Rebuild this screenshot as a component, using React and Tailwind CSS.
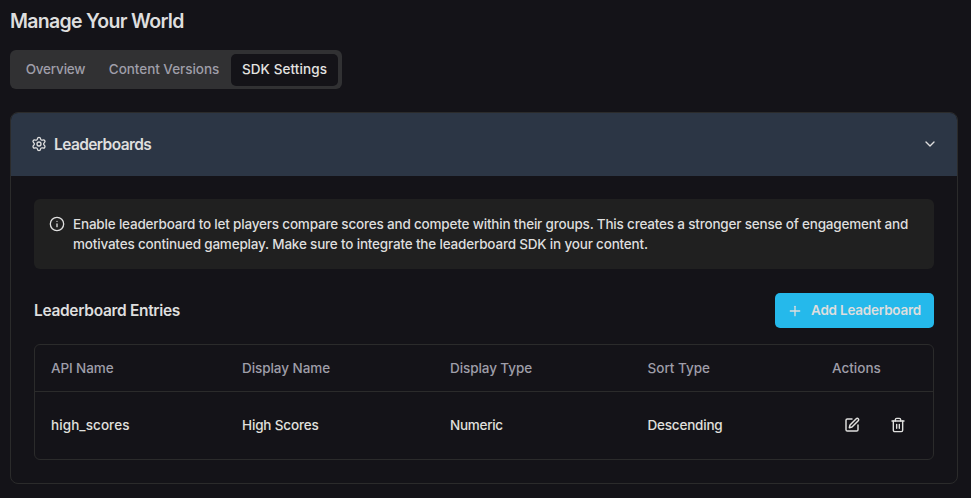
import { Settings, ChevronDown, Info, Plus } from "lucide-react";

const columns = "grid grid-cols-[191px_208px_197.5px_184.5px_1fr] items-center pl-4";

function Tab({ children, className }) {
  return (
    <button className={`flex h-[32px] items-center justify-center rounded-[5px] text-[13.5px] font-medium whitespace-nowrap ${className}`}>
      {children}
    </button>
  );
}

function EditIcon() {
  return (
    <svg width="16" height="16" viewBox="0 0 24 24" fill="none" stroke="currentColor" strokeWidth="2.2" strokeLinecap="round" strokeLinejoin="round">
      <path d="M12 3H5a2 2 0 0 0-2 2v14a2 2 0 0 0 2 2h14a2 2 0 0 0 2-2v-7" />
      <path d="M18.375 2.625a2.121 2.121 0 1 1 3 3L12 15l-4 1 1-4Z" />
    </svg>
  );
}

function TrashIcon() {
  return (
    <svg width="16" height="16" viewBox="0 0 24 24" fill="none" stroke="currentColor" strokeWidth="2.1" strokeLinecap="round" strokeLinejoin="round">
      <path d="M3 6h18" />
      <path d="M19 6v14c0 1-1 2-2 2H7c-1 0-2-1-2-2V6" />
      <path d="M8 6V4c0-1 1-2 2-2h4c1 0 2 1 2 2v2" />
      <path d="M10 11v6M14 11v6" />
    </svg>
  );
}

function LeaderboardTable() {
  return (
    <div className="mt-4 h-[115.5px] rounded-md border border-[#2b2b2b] text-[13.5px] font-medium">
      <div className={`${columns} h-[47px] border-b border-[#2b2b2b] text-[#9f9ea9]`}>
        <span className="tracking-[-0.1px]">API Name</span>
        <span className="tracking-[-0.06px]">Display Name</span>
        <span className="tracking-[-0.08px]">Display Type</span>
        <span>Sort Type</span>
        <span>Actions</span>
      </div>
      <div className={`${columns} h-[67px] text-[#e0e0de]`}>
        <span className="tracking-[0.08px]">high_scores</span>
        <span className="tracking-[-0.16px]">High Scores</span>
        <span className="tracking-[-0.28px]">Numeric</span>
        <span className="tracking-[-0.2px]">Descending</span>
        <span className="mb-px flex items-center gap-[30.5px] pl-[11.5px]">
          <EditIcon />
          <TrashIcon />
        </span>
      </div>
    </div>
  );
}

export default function App() {
  return (
    <main className="h-[498px] w-full overflow-hidden bg-[#141318] pt-[7px] pr-[13px] pl-[10px] font-['Inter','Liberation_Sans',sans-serif] text-[#dedede]">
      <h1 className="h-7 text-[19.5px] leading-7 font-semibold tracking-[-0.7px] whitespace-nowrap">Manage Your World</h1>
      <nav className="mt-[15px] flex h-[39px] w-[332px] items-center rounded-md bg-[#313133] px-1 text-[#9f9ea9]">
        <Tab className="w-[83px] tracking-[-0.2px]">Overview</Tab>
        <Tab className="w-[134px] tracking-[-0.04px]">Content Versions</Tab>
        <Tab className="w-[107px] bg-[#141318] tracking-[0.1px] text-[#e4e4e2]">SDK Settings</Tab>
      </nav>
      <section className="mt-[23px] h-[372px] overflow-hidden rounded-lg border border-[#2b2b2b]">
        <header className="flex h-[63px] items-center bg-[#2c3645] pr-[19px] pl-[19.5px]">
          <Settings size={16} className="mb-px" />
          <h2 className="ml-[7.5px] flex-1 pt-px text-[15.5px] font-semibold tracking-[-0.6px]">Leaderboards</h2>
          <ChevronDown size={16} className="mb-px" />
        </header>
        <div className="px-[23px] pt-[23px]">
          <div className="flex h-[70px] gap-2 rounded-md bg-[#202020] px-4 pt-[15px]">
            <Info size={16} className="mt-[2px] -ml-px shrink-0" />
            <p className="text-[13.5px] leading-5 font-[450] whitespace-nowrap">
              <span className="block tracking-[-0.189px]">Enable leaderboard to let players compare scores and compete within their groups. This creates a stronger sense of engagement and</span>
              <span className="block tracking-[-0.186px]">motivates continued gameplay. Make sure to integrate the leaderboard SDK in your content.</span>
            </p>
          </div>
          <div className="mt-6 flex h-[35px] items-center justify-between">
            <h3 className="pt-px text-[15.5px] font-semibold tracking-[-0.32px]">Leaderboard Entries</h3>
            <button className="flex h-[35px] w-[159px] items-center rounded-[5px] bg-[#25b9eb] pl-3 text-[13.5px] font-semibold whitespace-nowrap">
              <Plus size={16} />
              <span className="ml-2 tracking-[-0.22px]">Add Leaderboard</span>
            </button>
          </div>
          <LeaderboardTable />
        </div>
      </section>
    </main>
  );
}
